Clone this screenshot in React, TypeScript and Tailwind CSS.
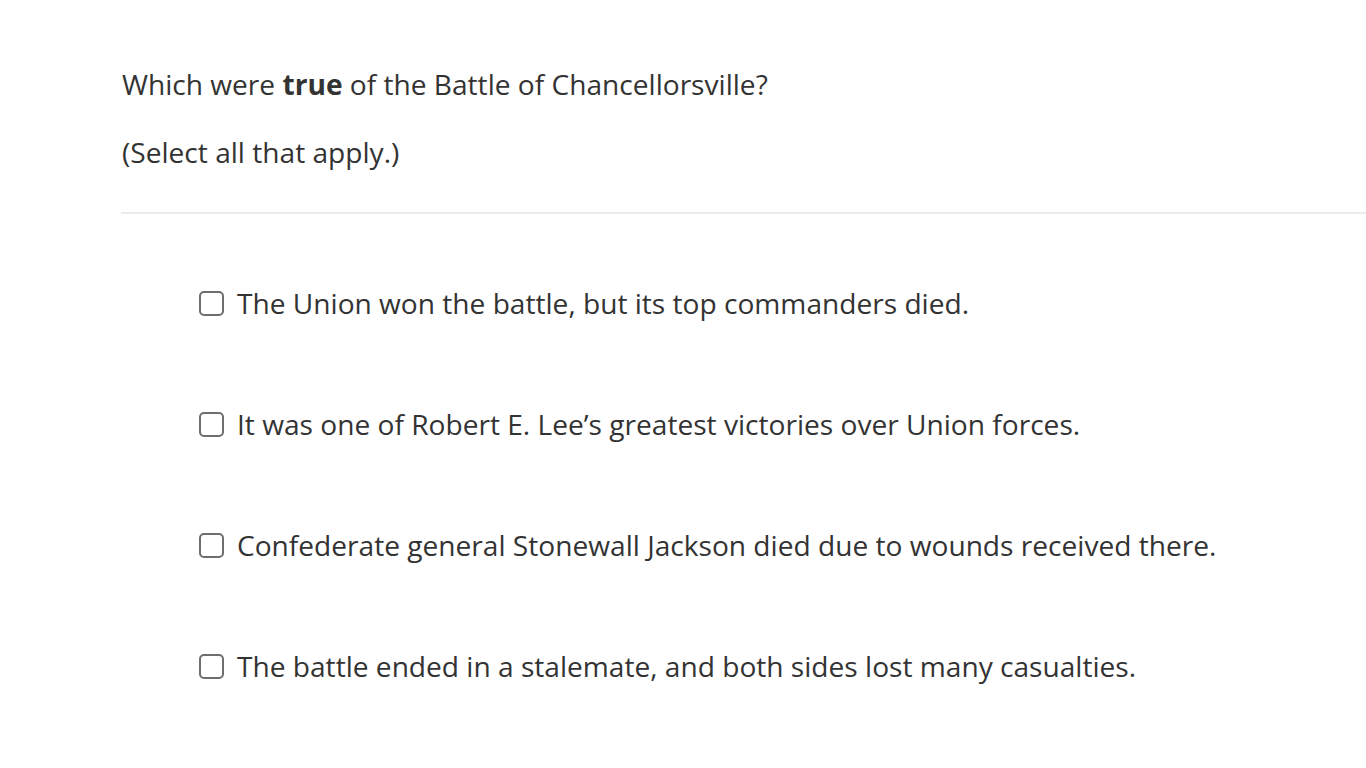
import React from "react";

const options = [
  "The Union won the battle, but its top commanders died.",
  "It was one of Robert E. Lee\u2019s greatest victories over Union forces.",
  "Confederate general Stonewall Jackson died due to wounds received there.",
  "The battle ended in a stalemate, and both sides lost many casualties.",
];

export default function App() {
  return (
    <div
      className="min-h-screen bg-white text-[#333333] pl-[122px]"
      style={{ fontFamily: '"Open Sans", sans-serif' }}
    >
      <div className="pt-[64px] text-[28.12px] leading-[40px]">
        <p>
          Which were <b className="font-bold">true</b> of the Battle of Chancellorsville?
        </p>
        <p className="mt-[28px]">(Select all that apply.)</p>
      </div>
      <div className="mt-[40px] -ml-px h-[2px] bg-[#ececec]" />
      <div className="pl-[77px] pt-[69px] flex flex-col gap-[81px]">
        {options.map((o) => (
          <label key={o} className="flex items-center gap-[13px] text-[28.12px] leading-[40px]">
            <span className="w-[25px] h-[25px] rounded-[5px] border-2 border-[#6e6e6e] shrink-0" />
            <span>{o}</span>
          </label>
        ))}
      </div>
    </div>
  );
}
